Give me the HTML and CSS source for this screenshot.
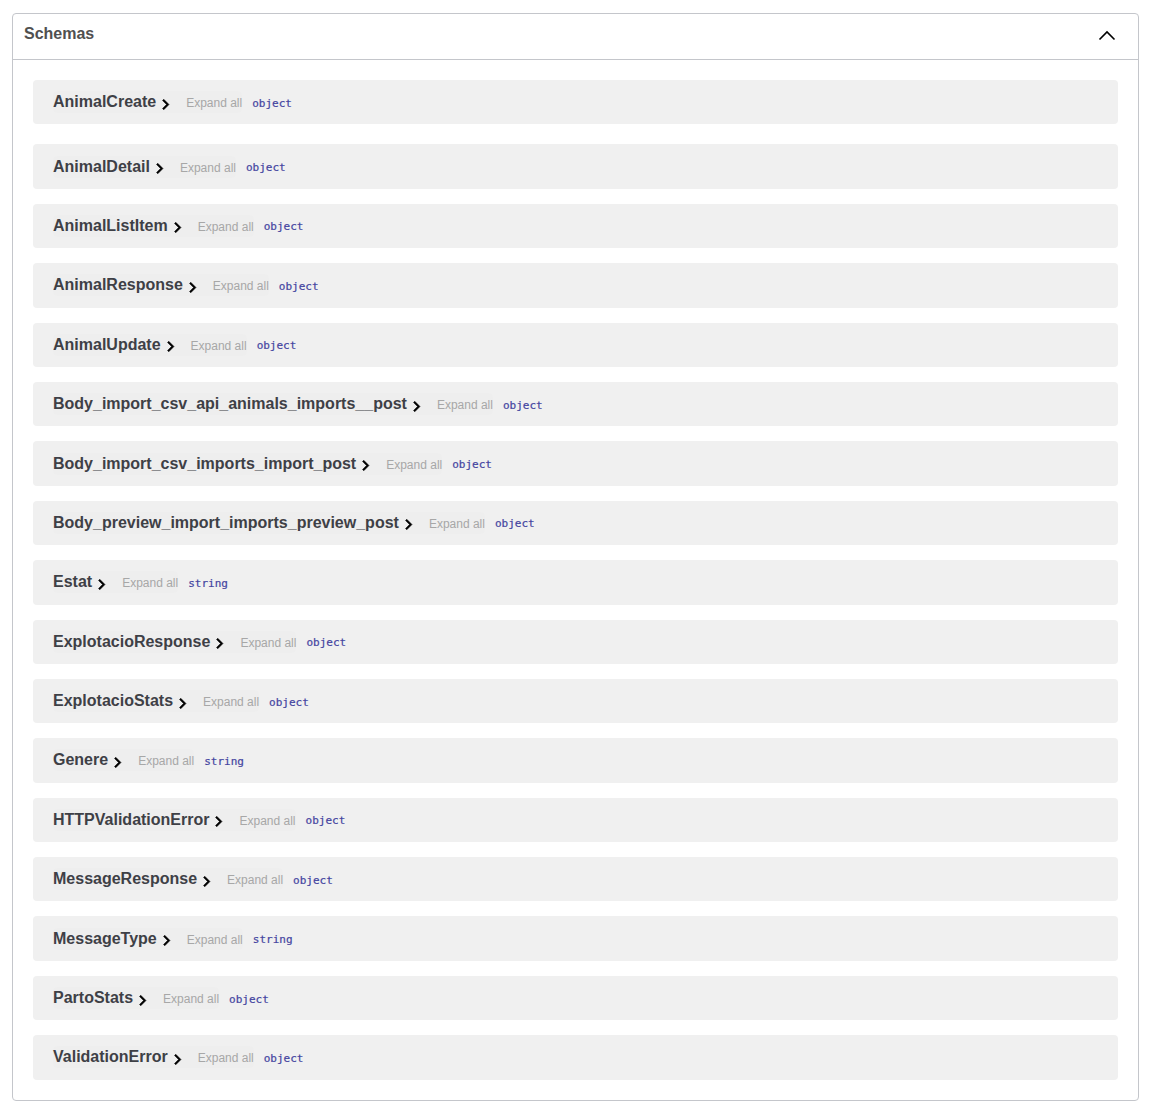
FILE: index.html
```html
<!DOCTYPE html>
<html>
<head>
<meta charset="utf-8">
<link rel="stylesheet" href="styles.css">
</head>
<body>
<section class="models">
  <div class="models-head">
    <h4 class="models-title">Schemas</h4>
    <svg class="head-arrow" width="20" height="20" viewBox="0 0 20 20"><path d="M2.5 14.5 L10 7 L17.5 14.5" fill="none" stroke="#000" stroke-width="1.6"/></svg>
  </div>
  <div class="models-body">
    <div class="model model-first"><span class="model-box"><span class="model-name">AnimalCreate</span><svg class="toggle" viewBox="0 0 24 24"><path d="M10 6L8.59 7.41 13.17 12l-4.58 4.59L10 18l6-6z"/></svg><span class="expand">Expand all</span></span><span class="type">object</span></div>
    <div class="model"><span class="model-box"><span class="model-name">AnimalDetail</span><svg class="toggle" viewBox="0 0 24 24"><path d="M10 6L8.59 7.41 13.17 12l-4.58 4.59L10 18l6-6z"/></svg><span class="expand">Expand all</span></span><span class="type">object</span></div>
    <div class="model"><span class="model-box"><span class="model-name">AnimalListItem</span><svg class="toggle" viewBox="0 0 24 24"><path d="M10 6L8.59 7.41 13.17 12l-4.58 4.59L10 18l6-6z"/></svg><span class="expand">Expand all</span></span><span class="type">object</span></div>
    <div class="model"><span class="model-box"><span class="model-name">AnimalResponse</span><svg class="toggle" viewBox="0 0 24 24"><path d="M10 6L8.59 7.41 13.17 12l-4.58 4.59L10 18l6-6z"/></svg><span class="expand">Expand all</span></span><span class="type">object</span></div>
    <div class="model"><span class="model-box"><span class="model-name">AnimalUpdate</span><svg class="toggle" viewBox="0 0 24 24"><path d="M10 6L8.59 7.41 13.17 12l-4.58 4.59L10 18l6-6z"/></svg><span class="expand">Expand all</span></span><span class="type">object</span></div>
    <div class="model"><span class="model-box"><span class="model-name">Body_import_csv_api_animals_imports__post</span><svg class="toggle" viewBox="0 0 24 24"><path d="M10 6L8.59 7.41 13.17 12l-4.58 4.59L10 18l6-6z"/></svg><span class="expand">Expand all</span></span><span class="type">object</span></div>
    <div class="model"><span class="model-box"><span class="model-name">Body_import_csv_imports_import_post</span><svg class="toggle" viewBox="0 0 24 24"><path d="M10 6L8.59 7.41 13.17 12l-4.58 4.59L10 18l6-6z"/></svg><span class="expand">Expand all</span></span><span class="type">object</span></div>
    <div class="model"><span class="model-box"><span class="model-name">Body_preview_import_imports_preview_post</span><svg class="toggle" viewBox="0 0 24 24"><path d="M10 6L8.59 7.41 13.17 12l-4.58 4.59L10 18l6-6z"/></svg><span class="expand">Expand all</span></span><span class="type">object</span></div>
    <div class="model"><span class="model-box"><span class="model-name">Estat</span><svg class="toggle" viewBox="0 0 24 24"><path d="M10 6L8.59 7.41 13.17 12l-4.58 4.59L10 18l6-6z"/></svg><span class="expand">Expand all</span></span><span class="type">string</span></div>
    <div class="model"><span class="model-box"><span class="model-name">ExplotacioResponse</span><svg class="toggle" viewBox="0 0 24 24"><path d="M10 6L8.59 7.41 13.17 12l-4.58 4.59L10 18l6-6z"/></svg><span class="expand">Expand all</span></span><span class="type">object</span></div>
    <div class="model"><span class="model-box"><span class="model-name">ExplotacioStats</span><svg class="toggle" viewBox="0 0 24 24"><path d="M10 6L8.59 7.41 13.17 12l-4.58 4.59L10 18l6-6z"/></svg><span class="expand">Expand all</span></span><span class="type">object</span></div>
    <div class="model"><span class="model-box"><span class="model-name">Genere</span><svg class="toggle" viewBox="0 0 24 24"><path d="M10 6L8.59 7.41 13.17 12l-4.58 4.59L10 18l6-6z"/></svg><span class="expand">Expand all</span></span><span class="type">string</span></div>
    <div class="model"><span class="model-box"><span class="model-name">HTTPValidationError</span><svg class="toggle" viewBox="0 0 24 24"><path d="M10 6L8.59 7.41 13.17 12l-4.58 4.59L10 18l6-6z"/></svg><span class="expand">Expand all</span></span><span class="type">object</span></div>
    <div class="model"><span class="model-box"><span class="model-name">MessageResponse</span><svg class="toggle" viewBox="0 0 24 24"><path d="M10 6L8.59 7.41 13.17 12l-4.58 4.59L10 18l6-6z"/></svg><span class="expand">Expand all</span></span><span class="type">object</span></div>
    <div class="model"><span class="model-box"><span class="model-name">MessageType</span><svg class="toggle" viewBox="0 0 24 24"><path d="M10 6L8.59 7.41 13.17 12l-4.58 4.59L10 18l6-6z"/></svg><span class="expand">Expand all</span></span><span class="type">string</span></div>
    <div class="model"><span class="model-box"><span class="model-name">PartoStats</span><svg class="toggle" viewBox="0 0 24 24"><path d="M10 6L8.59 7.41 13.17 12l-4.58 4.59L10 18l6-6z"/></svg><span class="expand">Expand all</span></span><span class="type">object</span></div>
    <div class="model"><span class="model-box"><span class="model-name">ValidationError</span><svg class="toggle" viewBox="0 0 24 24"><path d="M10 6L8.59 7.41 13.17 12l-4.58 4.59L10 18l6-6z"/></svg><span class="expand">Expand all</span></span><span class="type">object</span></div>
  </div>
</section>
</body>
</html>
```
FILE: styles.css
```css
html, body {
  margin: 0;
  padding: 0;
  background: #fff;
}
body {
  padding: 13px 10px 0 12px;
  font-family: "Liberation Sans", Arial, sans-serif;
}
.models {
  border: 1px solid #c4c6cb;
  border-radius: 4px;
}
.models-head {
  display: flex;
  align-items: center;
  justify-content: space-between;
  height: 45px;
  padding: 0 21px 0 11px;
  border-bottom: 1px solid #c4c6cb;
}
.models-title {
  margin: 0;
  font-size: 16px;
  font-weight: bold;
  color: #505050;
  position: relative;
  top: -3px;
}
.head-arrow {
  display: block;
  position: relative;
  top: -2px;
}
.models-body {
  padding: 20px 20px 5px;
}
.model {
  display: flex;
  align-items: center;
  height: 44.4px;
  margin-bottom: 15px;
  padding: 0 20px;
  background: #f0f0f0;
  border-radius: 4px;
}
.model-first {
  margin-bottom: 20px;
}
.model-box {
  display: flex;
  align-items: center;
  height: 22px;
  background: rgba(0, 0, 0, 0.008);
  border-radius: 4px;
}
.model-name {
  font-size: 16px;
  font-weight: bold;
  color: #3e4046;
}
.toggle {
  width: 21px;
  height: 21px;
  margin-left: -1px;
  position: relative;
  top: 2px;
  fill: #000;
  stroke: #000;
  stroke-width: 0.6;
}
.expand {
  margin-left: 10px;
  font-size: 12px;
  color: #a7a7a7;
  position: relative;
  top: 1px;
}
.type {
  margin-left: 10px;
  font-family: "DejaVu Sans Mono", "Liberation Mono", monospace;
  font-size: 11px;
  font-weight: normal;
  color: #4444a0;
  -webkit-text-stroke: 0.2px #4444a0;
  position: relative;
  top: 1px;
}
```
